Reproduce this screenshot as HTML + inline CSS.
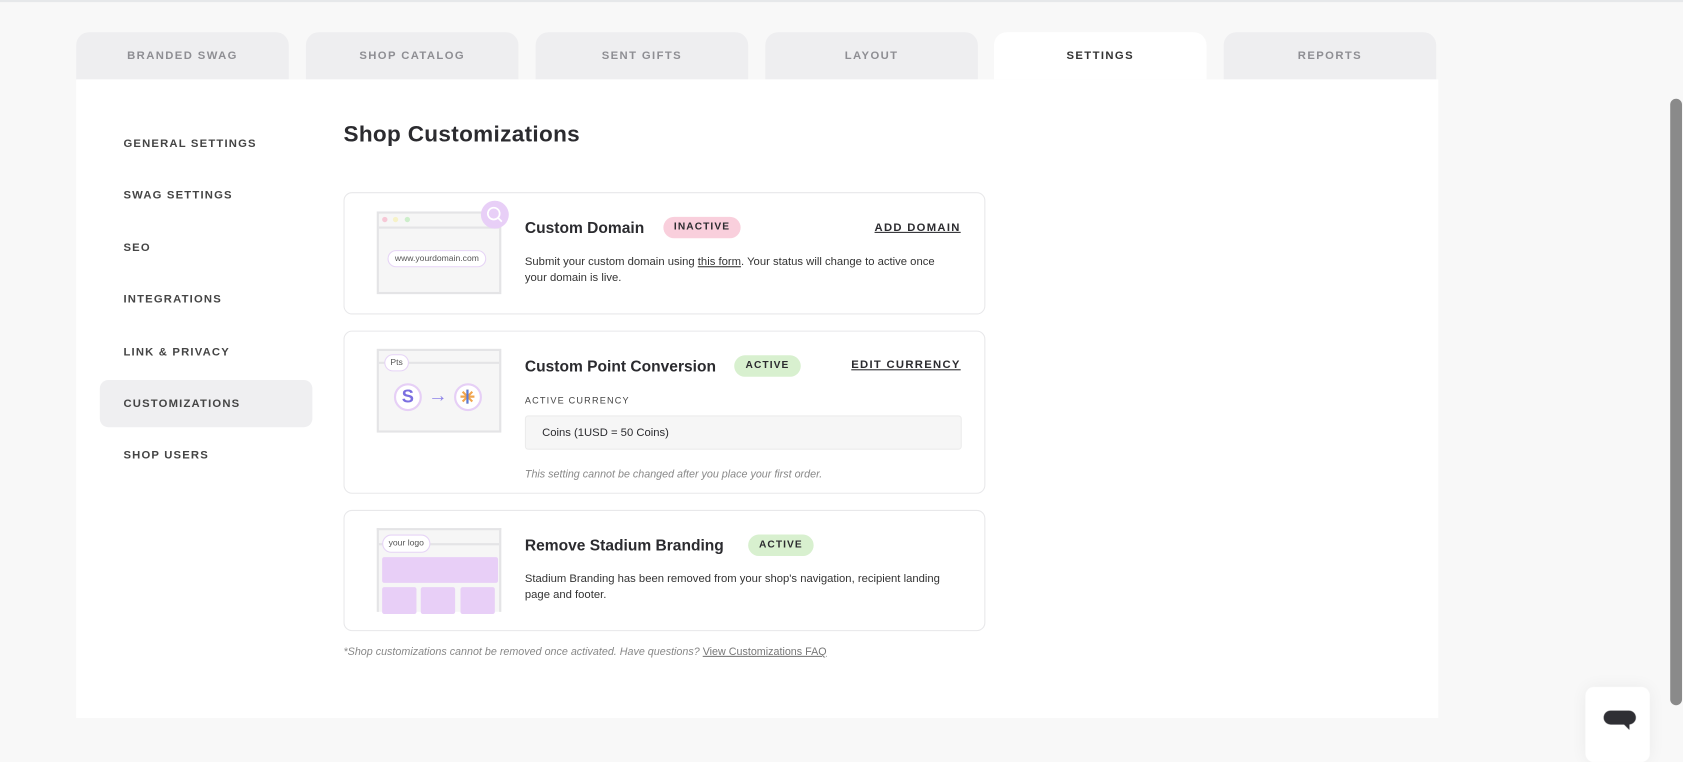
<!DOCTYPE html>
<html><head><style>
*{box-sizing:border-box;margin:0;padding:0}
body{width:1683px;height:748px;background:#f8f8f8;font-family:"Liberation Sans",sans-serif;color:#2b2b2f;overflow:hidden}
#w{position:absolute;left:0;top:0;width:1568px;height:697px;transform:scale(1.0734);transform-origin:0 0;border-top:2px solid #e6e8ea}
.tab{position:absolute;top:28px;width:198px;height:44px;background:#eeeef0;border-radius:12px 12px 0 0;font-size:10.5px;font-weight:bold;letter-spacing:1.3px;color:#8e8e93;text-align:center;line-height:44px}
.tab.on{background:#fff;color:#333}
.panel{position:absolute;left:71px;top:72px;width:1269px;height:595px;background:#fff}
.nav{position:absolute;left:115px;font-size:10.5px;font-weight:bold;letter-spacing:1.1px;color:#444}
.act{position:absolute;left:93px;top:352px;width:198px;height:44px;background:#efeff1;border-radius:8px}
h1{position:absolute;left:320px;top:112px;font-size:21px;font-weight:bold;letter-spacing:.3px}
.card{position:absolute;left:320px;width:598px;border:1px solid #e8e8ea;border-radius:8px}
.ill{position:absolute;left:30px;width:116px;background:#f6f6f6;border:2px solid #e4e4e6}
.t{position:absolute;left:168px;font-size:14.5px;font-weight:bold}
.b{position:absolute;height:20px;border-radius:10px;font-size:9.5px;font-weight:bold;letter-spacing:1px;line-height:20px;text-align:center}
.lk{position:absolute;right:22px;font-size:10.5px;font-weight:bold;letter-spacing:1.2px;text-decoration:underline}
.p{position:absolute;left:168px;font-size:10.5px;line-height:15px;color:#333;width:410px}
.pill{position:absolute;background:#fff;border:1.5px solid #e6d4f6;border-radius:10px;font-size:8px;color:#555;text-align:center}
.pu{position:absolute;background:#e8cff7;border-radius:2px}
</style></head><body><div id="w">
<div class="tab" style="left:71px">BRANDED SWAG</div>
<div class="tab" style="left:285px">SHOP CATALOG</div>
<div class="tab" style="left:499px">SENT GIFTS</div>
<div class="tab" style="left:713px">LAYOUT</div>
<div class="tab on" style="left:926px">SETTINGS</div>
<div class="tab" style="left:1140px">REPORTS</div>
<div class="panel"></div>
<div class="act"></div>
<div class="nav" style="top:126px">GENERAL SETTINGS</div>
<div class="nav" style="top:174px">SWAG SETTINGS</div>
<div class="nav" style="top:223px">SEO</div>
<div class="nav" style="top:271px">INTEGRATIONS</div>
<div class="nav" style="top:320px">LINK &amp; PRIVACY</div>
<div class="nav" style="top:368px">CUSTOMIZATIONS</div>
<div class="nav" style="top:416px">SHOP USERS</div>
<h1>Shop Customizations</h1>

<div class="card" style="top:177px;height:114px">
 <div class="ill" style="top:17px;height:77px">
  <div style="position:absolute;left:0;right:0;top:12px;border-top:2px solid #e4e4e6"></div>
  <div style="position:absolute;left:3px;top:3px;width:5px;height:5px;border-radius:50%;background:#f6c8d6"></div>
  <div style="position:absolute;left:13px;top:3px;width:5px;height:5px;border-radius:50%;background:#f6f2c8"></div>
  <div style="position:absolute;left:24px;top:3px;width:5px;height:5px;border-radius:50%;background:#cdeecb"></div>
  <div class="pill" style="left:8px;top:34px;width:92px;height:16px;line-height:13px">www.yourdomain.com</div>
 </div>
 <div style="position:absolute;left:127px;top:7px;width:26px;height:26px;border-radius:50%;background:#e8cff7"><svg width="26" height="26"><circle cx="12" cy="12" r="5.5" fill="none" stroke="#fff" stroke-width="1.6"/><path d="M16 16l3.5 3.5" stroke="#fff" stroke-width="1.6"/></svg></div>
 <div class="t" style="top:25px">Custom Domain</div>
 <div class="b" style="left:297px;top:22px;width:72px;background:#f9cfdc">INACTIVE</div>
 <div class="lk" style="top:26px">ADD DOMAIN</div>
 <div class="p" style="top:57px;width:400px">Submit your custom domain using <u>this form</u>. Your status will change to active once your domain is live.</div>
</div>

<div class="card" style="top:306px;height:152px">
 <div class="ill" style="top:16px;height:78px">
  <div style="position:absolute;left:0;right:0;top:10px;border-top:2px solid #e4e4e6"></div>
  <div class="pill" style="left:5px;top:3px;width:23px;height:16px;line-height:13px">Pts</div>
  <div style="position:absolute;left:14px;top:30px;width:26px;height:26px;border-radius:50%;border:2.5px solid #e6cff6;background:#fff;color:#7b6fe0;font-weight:bold;font-size:17px;text-align:center;line-height:21px">S</div>
  <div style="position:absolute;left:46px;top:31px;color:#8d82e8;font-size:18px">→</div>
  <div style="position:absolute;left:70px;top:30px;width:26px;height:26px;border-radius:50%;border:2.5px solid #e6cff6;background:#fff"><svg width="21" height="21"><path d="M10.5 4v13M4 10.5h13M6 6l9 9M15 6l-9 9" stroke="#f1a54e" stroke-width="2"/><path d="M10.5 4v13" stroke="#5a7ad8" stroke-width="2"/></svg></div>
 </div>
 <div class="t" style="top:25px">Custom Point Conversion</div>
 <div class="b" style="left:363px;top:22px;width:62px;background:#d8f0cf">ACTIVE</div>
 <div class="lk" style="top:25px">EDIT CURRENCY</div>
 <div style="position:absolute;left:168px;top:59px;font-size:8.5px;letter-spacing:1.1px;color:#444">ACTIVE CURRENCY</div>
 <div style="position:absolute;left:168px;top:78px;width:407px;height:32px;background:#f6f6f6;border:1px solid #ececec;border-radius:3px;font-size:10.5px;line-height:30px;padding-left:15px">Coins (1USD = 50 Coins)</div>
 <div style="position:absolute;left:168px;top:128px;font-size:10px;font-style:italic;color:#888">This setting cannot be changed after you place your first order.</div>
</div>

<div class="card" style="top:473px;height:113px">
 <div class="ill" style="top:16px;height:78px;border-bottom:none">
  <div style="position:absolute;left:0;right:0;top:12px;border-top:2px solid #e4e4e6"></div>
  <div class="pill" style="left:3px;top:4px;width:45px;height:17px;line-height:14px">your logo</div>
  <div class="pu" style="left:3px;top:25px;width:108px;height:24px"></div>
  <div class="pu" style="left:3px;top:53px;width:32px;height:25px"></div>
  <div class="pu" style="left:39px;top:53px;width:32px;height:25px"></div>
  <div class="pu" style="left:76px;top:53px;width:32px;height:25px"></div>
 </div>
 <div class="t" style="top:25px">Remove Stadium Branding</div>
 <div class="b" style="left:376px;top:22px;width:61px;background:#d8f0cf">ACTIVE</div>
 <div class="p" style="top:56px;width:400px">Stadium Branding has been removed from your shop's navigation, recipient landing page and footer.</div>
</div>
<div style="position:absolute;left:320px;top:600px;font-size:10px;font-style:italic;color:#888">*Shop customizations cannot be removed once activated. Have questions? <u style="font-style:normal;color:#777">View Customizations FAQ</u></div>

<div style="position:absolute;left:1556px;top:90px;width:11px;height:565px;background:#8a8a8a;border-radius:6px"></div>
<div style="position:absolute;left:1477px;top:638px;width:60px;height:70px;background:#fff;border-radius:8px;box-shadow:0 0 16px rgba(0,0,0,.06)">
 <div style="position:absolute;left:17px;top:22px;width:30px;height:13px;background:#2f2f34;border-radius:7px"></div>
 <svg style="position:absolute;left:35px;top:34px" width="8" height="6"><path d="M0 0h6v6z" fill="#2f2f34"/></svg>
</div>
</div></body></html>
